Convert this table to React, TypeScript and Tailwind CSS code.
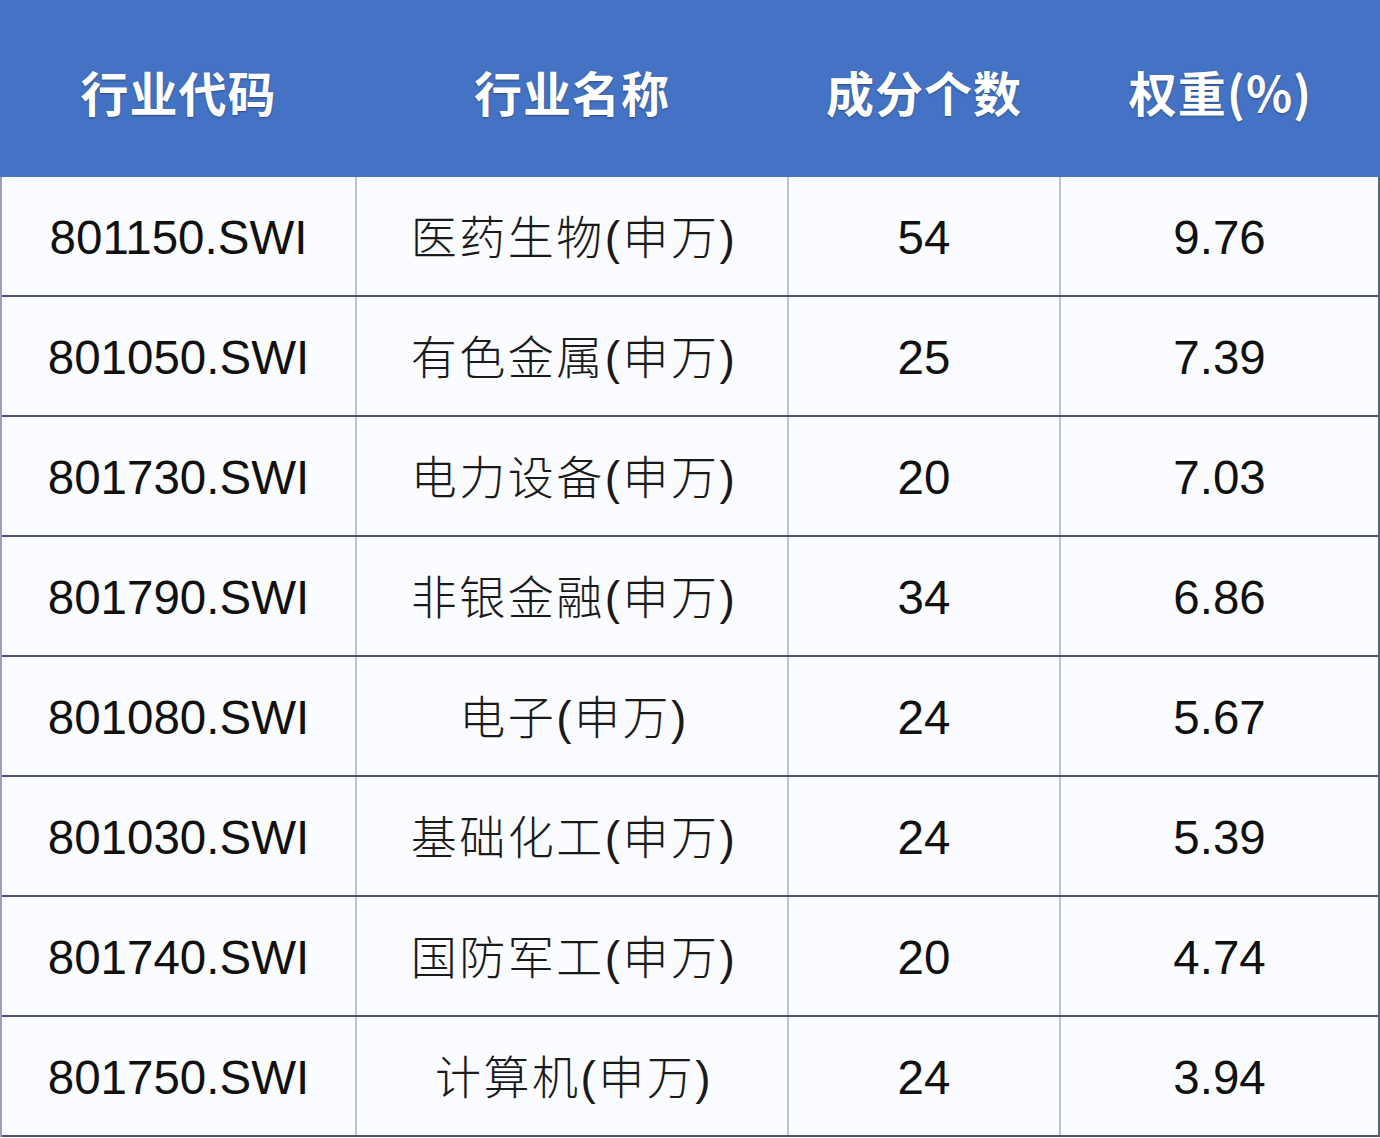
import React from "react";

const rows = [
  ["801150.SWI", "医药生物(申万)", "54", "9.76"],
  ["801050.SWI", "有色金属(申万)", "25", "7.39"],
  ["801730.SWI", "电力设备(申万)", "20", "7.03"],
  ["801790.SWI", "非银金融(申万)", "34", "6.86"],
  ["801080.SWI", "电子(申万)", "24", "5.67"],
  ["801030.SWI", "基础化工(申万)", "24", "5.39"],
  ["801740.SWI", "国防军工(申万)", "20", "4.74"],
  ["801750.SWI", "计算机(申万)", "24", "3.94"],
];

const headers = ["行业代码", "行业名称", "成分个数", "权重(%)"];

export default function App() {
  return (
    <div
      className="w-[1380px] h-[1138px] bg-white overflow-hidden"
      style={{ fontFamily: '"Liberation Sans", "Noto Sans CJK SC", sans-serif' }}
    >
      <div className="grid grid-cols-[355px_432px_272px_321px] h-[177px] bg-[#4472c4] text-white font-bold text-[48px] tracking-[1px] [text-shadow:0_1px_2px_rgba(0,0,0,0.35)] [font-family:'Noto_Sans_CJK_SC',sans-serif]">
        {headers.map((h, i) => (
          <div key={i} className="flex items-center justify-center pt-[4px] pl-[2px]">
            {h}
          </div>
        ))}
      </div>
      <div className="border-l-2 border-r-2 border-l-[#9aa0b8] border-r-[#5a6280]">
        {rows.map((r, ri) => (
          <div
            key={ri}
            className="grid grid-cols-[353px_432px_272px_319px] h-[120px] border-b-2 border-[#4b5573] bg-[#fbfcff] text-[#111] text-[47.5px]"
          >
            {r.map((c, ci) => (
              <div
                key={ci}
                className={
                  "flex items-center justify-center pt-[4px] " +
                  (ci > 0 ? "border-l-2 border-[#bcc0d8]" : "") +
                  (ci === 1 ? " text-[46px] tracking-[2.5px] font-light text-[#1a1a1a] pl-[4px]" : "")
                }
              >
                {c}
              </div>
            ))}
          </div>
        ))}
      </div>
    </div>
  );
}
